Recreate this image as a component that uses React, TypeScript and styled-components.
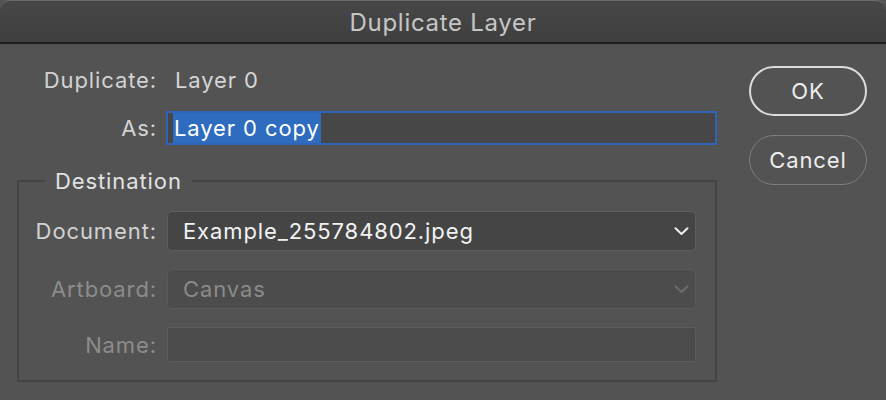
import React from "react";
import styled, { createGlobalStyle, css } from "styled-components";

const Global = createGlobalStyle`
  html, body { margin: 0; padding: 0; background: #535353; }
  body { font-family: Inter, "Noto Sans", "Liberation Sans", sans-serif; -webkit-font-smoothing: antialiased; }
  * { box-sizing: border-box; }
`;

const Window = styled.div`
  width: 886px;
  height: 400px;
  display: flex;
  flex-direction: column;
  background: #535353;
  overflow: hidden;
`;

const TitleBar = styled.div`
  height: 44px;
  flex: none;
  display: flex;
  align-items: center;
  justify-content: center;
  padding-top: 2px;
  background: linear-gradient(#474747, #3f3f3f);
  border-top: 1px solid #6a6a6a;
  border-bottom: 2px solid #1e1e1e;
  border-radius: 10px 10px 0 0;
  color: #c6c6c6;
  font-size: 24px;
  letter-spacing: 0.7px;
`;

const Body = styled.div`
  flex: 1;
  display: flex;
  padding: 18px 19px 0 17px;
  gap: 32px;
`;

const Main = styled.div`
  width: 700px;
  display: flex;
  flex-direction: column;
`;

const Grid = styled.div<{ $labelWidth: number; $rowGap: number }>`
  display: grid;
  grid-template-columns: ${(p) => p.$labelWidth}px 1fr;
  column-gap: 11px;
  row-gap: ${(p) => p.$rowGap}px;
  align-items: center;
`;

const textStyle = css`
  font-size: 22px;
  letter-spacing: 0.9px;
`;

const Label = styled.div<{ $disabled?: boolean }>`
  ${textStyle};
  text-align: right;
  margin-right: -1px;
  color: ${(p) => (p.$disabled ? "#8c8c8c" : "#d2d2d2")};
  white-space: nowrap;
`;

const Value = styled.div`
  ${textStyle};
  height: 36px;
  display: flex;
  align-items: center;
  padding-left: 8px;
  color: #d6d6d6;
`;

const TextField = styled.div<{ $focused?: boolean; $disabled?: boolean }>`
  ${textStyle};
  display: flex;
  align-items: center;
  height: ${(p) => (p.$focused ? 34 : 35)}px;
  ${(p) =>
    p.$focused
      ? css`
          margin-left: -1px;
          border: 2px solid #2f65b8;
          background: #474747;
          padding-left: 5px;
        `
      : css`
          border: 1.5px solid #5c5c5c;
          background: #4b4b4b;
          border-radius: 2px;
        `}
`;

const Selection = styled.span`
  background: #2e6cc0;
  color: #ffffff;
  height: 30px;
  display: flex;
  align-items: center;
  padding: 0 1px;
`;

const Fieldset = styled.fieldset`
  margin: 23px 0 0;
  padding: 17px 19px 18px 0;
  border: 2px solid #444444;
  border-radius: 1px;
`;

const Legend = styled.legend`
  ${textStyle};
  margin-left: 26px;
  padding: 0 10px;
  line-height: 26px;
  color: #e2e2e2;
`;

const Select = styled.div<{ $disabled?: boolean }>`
  ${textStyle};
  height: 40px;
  display: flex;
  align-items: center;
  justify-content: space-between;
  padding: 0 6px 0 15px;
  border-radius: 5px;
  ${(p) =>
    p.$disabled
      ? css`
          background: #4c4c4c;
          border: 1.5px solid #5a5a5a;
          color: #8a8a8a;
        `
      : css`
          background: #454545;
          border: 1.5px solid #5e5e5e;
          color: #f2f2f2;
        `}
`;

const Buttons = styled.div`
  display: flex;
  flex-direction: column;
  gap: 19px;
  padding-top: 4px;
`;

const PillButton = styled.button<{ $primary?: boolean }>`
  ${textStyle};
  width: 118px;
  height: 50px;
  border-radius: 25px;
  background: transparent;
  font-family: inherit;
  color: #ededed;
  padding: 0;
  border: ${(p) => (p.$primary ? "2px solid #dcdcdc" : "1.5px solid #7d7d7d")};
`;

const ChevronIcon = styled.svg`
  flex: none;
`;

const Chevron = ({ color }: { color: string }) => (
  <ChevronIcon width="15" height="10" viewBox="0 0 15 10" fill="none">
    <path d="M1.5 2.2 L7.5 8 L13.5 2.2" stroke={color} strokeWidth="2" strokeLinecap="round" strokeLinejoin="round" />
  </ChevronIcon>
);

export default function App() {
  return (
    <>
      <Global />
      <Window>
        <TitleBar>Duplicate Layer</TitleBar>
        <Body>
          <Main>
            <Grid $labelWidth={139} $rowGap={13}>
              <Label>Duplicate:</Label>
              <Value>Layer 0</Value>
              <Label>As:</Label>
              <TextField $focused>
                <Selection>Layer 0 copy</Selection>
              </TextField>
            </Grid>
            <Fieldset>
              <Legend>Destination</Legend>
              <Grid $labelWidth={137} $rowGap={18}>
                <Label>Document:</Label>
                <Select>
                  <span>Example_255784802.jpeg</span>
                  <Chevron color="#eeeeee" />
                </Select>
                <Label $disabled>Artboard:</Label>
                <Select $disabled>
                  <span>Canvas</span>
                  <Chevron color="#6c6c6c" />
                </Select>
                <Label $disabled>Name:</Label>
                <TextField $disabled />
              </Grid>
            </Fieldset>
          </Main>
          <Buttons>
            <PillButton $primary>OK</PillButton>
            <PillButton>Cancel</PillButton>
          </Buttons>
        </Body>
      </Window>
    </>
  );
}
